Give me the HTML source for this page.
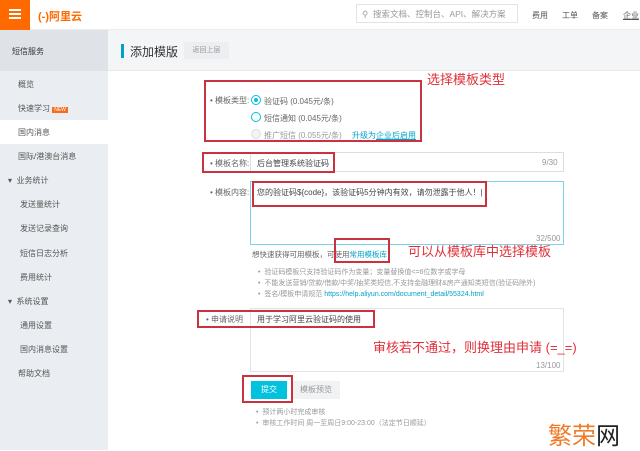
<!DOCTYPE html>
<html><head><meta charset="utf-8"><style>
*{margin:0;padding:0;box-sizing:border-box}
body{width:640px;height:450px;overflow:hidden;background:#fff;font-family:"Liberation Sans","Noto Sans CJK SC",sans-serif;font-size:8px;color:#333;position:relative}
.a{position:absolute;white-space:nowrap}
.red{position:absolute;border:2px solid #c8333f}
.g{color:#999}
.lb{color:#666}
.ann{color:#e0303a;font-size:13px}
.nav{color:#555;font-size:8px}
</style></head><body>
<div class="a" style="left:0;top:0;width:640px;height:30px;background:#fff;border-bottom:1px solid #eee"></div>
<div class="a" style="left:0;top:0;width:30px;height:30px;background:#ff6a00"></div>
<div class="a" style="left:9px;top:9px;width:12px;height:2px;background:#fff;box-shadow:0 4px 0 #fff,0 8px 0 #fff"></div>
<div class="a" style="left:38px;top:8px;color:#ff6a00;font-size:11px;font-weight:bold">(-)阿里云</div>
<div class="a" style="left:356px;top:4px;width:162px;height:19px;border:1px solid #e3e3e3"></div>
<div class="a g" style="left:362px;top:8px;font-size:8.5px">⚲&nbsp; 搜索文档、控制台、API、解决方案</div>
<div class="a nav" style="left:532px;top:10px">费用</div>
<div class="a nav" style="left:562px;top:10px">工单</div>
<div class="a nav" style="left:592px;top:10px">备案</div>
<div class="a nav" style="left:623px;top:10px;text-decoration:underline">企业</div>
<div class="a" style="left:0;top:30px;width:108px;height:420px;background:#eaedf1"></div>
<div class="a" style="left:0;top:30px;width:108px;height:41px;background:#dfe3e8"></div>
<div class="a" style="left:12px;top:46px;font-size:8px;color:#333">短信服务</div>
<div class="a" style="left:0;top:120px;width:108px;height:24px;background:#fff"></div>
<div class="a nav" style="left:18px;top:79px">概览</div>
<div class="a nav" style="left:18px;top:103px">快速学习 <span style="background:#f56c1d;color:#fff;font-size:5px;padding:0 2px">NEW</span></div>
<div class="a nav" style="left:18px;top:127px">国内消息</div>
<div class="a nav" style="left:18px;top:151px">国际/港澳台消息</div>
<div class="a nav" style="left:8px;top:175px">▾&nbsp; 业务统计</div>
<div class="a nav" style="left:20px;top:199px">发送量统计</div>
<div class="a nav" style="left:20px;top:223px">发送记录查询</div>
<div class="a nav" style="left:20px;top:248px">短信日志分析</div>
<div class="a nav" style="left:20px;top:272px">费用统计</div>
<div class="a nav" style="left:8px;top:296px">▾&nbsp; 系统设置</div>
<div class="a nav" style="left:20px;top:320px">通用设置</div>
<div class="a nav" style="left:20px;top:344px">国内消息设置</div>
<div class="a nav" style="left:18px;top:368px">帮助文档</div>
<div class="a" style="left:108px;top:30px;width:532px;height:41px;background:#f4f5f7;border-bottom:1px solid #e8e8e8"></div>
<div class="a" style="left:121px;top:44px;width:3px;height:14px;background:#00a2ca"></div>
<div class="a" style="left:130px;top:43px;font-size:12px;color:#333">添加模版</div>
<div class="a g" style="left:184px;top:42px;width:45px;height:17px;background:#eceef1;font-size:7px;text-align:center;line-height:17px">返回上层</div>
<div class="a lb" style="left:210px;top:95px">• 模板类型:</div>
<div class="a" style="left:251px;top:95px;width:10px;height:10px;border:1px solid #00c1de;border-radius:50%"><div style="margin:2px;width:4px;height:4px;background:#00c1de;border-radius:50%"></div></div>
<div class="a lb" style="left:264px;top:96px">验证码 (0.045元/条)</div>
<div class="a" style="left:251px;top:112px;width:10px;height:10px;border:1px solid #00c1de;border-radius:50%"></div>
<div class="a lb" style="left:264px;top:113px">短信通知 (0.045元/条)</div>
<div class="a" style="left:251px;top:129px;width:10px;height:10px;border:1px solid #ddd;background:#f3f3f3;border-radius:50%"></div>
<div class="a g" style="left:264px;top:130px">推广短信 (0.055元/条)</div>
<div class="a" style="left:352px;top:130px;color:#00a2ca">升级为<u>企业后启用</u></div>
<div class="red" style="left:204px;top:80px;width:218px;height:62px"></div>
<div class="a lb" style="left:210px;top:158px">• 模板名称:</div>
<div class="a" style="left:250px;top:152px;width:314px;height:20px;border:1px solid #ddd"></div>
<div class="a" style="left:257px;top:158px;color:#444">后台管理系统验证码</div>
<div class="a g" style="left:542px;top:158px">9/30</div>
<div class="red" style="left:202px;top:152px;width:133px;height:21px"></div>
<div class="a lb" style="left:210px;top:187px">• 模板内容:</div>
<div class="a" style="left:250px;top:181px;width:314px;height:64px;border:1px solid #7fd3e6"></div>
<div class="a" style="left:257px;top:187px;color:#444">您的验证码${code}，该验证码5分钟内有效，请勿泄露于他人！|</div>
<div class="a g" style="left:536px;top:234px">32/500</div>
<div class="red" style="left:252px;top:181px;width:235px;height:26px"></div>
<div class="a lb" style="left:252px;top:249px;font-size:7.5px">想快速获得可用模板，可使用<span style="color:#00a2ca">常用模板库</span></div>
<div class="red" style="left:334px;top:238px;width:56px;height:25px"></div>
<div class="a g" style="left:258px;top:267px;font-size:7px">• &nbsp;验证码模板只支持验证码作为变量；变量替换值&lt;=6位数字或字母</div>
<div class="a g" style="left:258px;top:278px;font-size:7px">• &nbsp;不能发送营销/贷款/借款/中奖/抽奖类短信,不支持金融理财&amp;房产通知类短信(验证码除外)</div>
<div class="a g" style="left:258px;top:289px;font-size:7px">• &nbsp;签名/模板申请规范 <span style="color:#00a2ca">https://help.aliyun.com/document_detail/55324.html</span></div>
<div class="a lb" style="left:206px;top:314px">• 申请说明</div>
<div class="a" style="left:250px;top:308px;width:314px;height:64px;border:1px solid #e3e3e3"></div>
<div class="a" style="left:257px;top:314px;color:#444">用于学习阿里云验证码的使用</div>
<div class="a g" style="left:536px;top:361px">13/100</div>
<div class="red" style="left:197px;top:310px;width:178px;height:18px"></div>
<div class="a" style="left:251px;top:381px;width:36px;height:18px;background:#00c1de;color:#fff;text-align:center;line-height:18px">提交</div>
<div class="a g" style="left:292px;top:381px;width:48px;height:18px;background:#f1f2f4;text-align:center;line-height:18px">模板预览</div>
<div class="red" style="left:242px;top:375px;width:51px;height:28px"></div>
<div class="a g" style="left:256px;top:407px;font-size:7px">• &nbsp;预计两小时完成审核</div>
<div class="a g" style="left:256px;top:418px;font-size:7px">• &nbsp;审核工作时间 周一至周日9:00-23:00（法定节日顺延）</div>
<div class="a ann" style="left:427px;top:69px">选择模板类型</div>
<div class="a ann" style="left:408px;top:241px">可以从模板库中选择模板</div>
<div class="a ann" style="left:373px;top:337px">审核若不通过，则换理由申请 (=_=)</div>
<div class="a" style="left:548px;top:416px;font-size:24px;color:#f07a28">繁荣<span style="color:#222">网</span></div>
</body></html>
